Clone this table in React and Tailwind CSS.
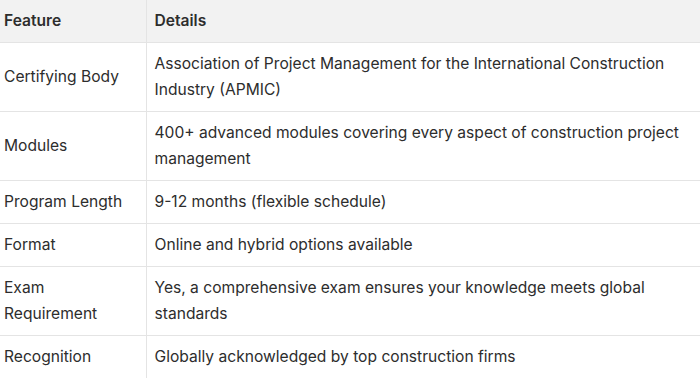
const rows = [
  ["Certifying Body", "Association of Project Management for the International Construction Industry (APMIC)"],
  ["Modules", "400+ advanced modules covering every aspect of construction project management"],
  ["Program Length", "9-12 months (flexible schedule)"],
  ["Format", "Online and hybrid options available"],
  ["Exam Requirement", "Yes, a comprehensive exam ensures your knowledge meets global standards"],
  ["Recognition", "Globally acknowledged by top construction firms"],
];

export default function App() {
  return (
    <div className="w-[700px] h-[378px] overflow-hidden bg-white text-[#2d2d2d] font-['Inter',sans-serif] text-[15.6px] leading-[26px]">
      <table className="w-full border-collapse">
        <thead>
          <tr className="bg-[#f2f2f2] border-b border-[#e4e4e4]">
            <th className="w-[146px] text-left font-semibold pl-1 pr-2 py-2 border-r border-[#e4e4e4]">Feature</th>
            <th className="text-left font-semibold px-2 py-2">Details</th>
          </tr>
        </thead>
        <tbody>
          {rows.map(([k, v]) => (
            <tr key={k} className="border-b border-[#e4e4e4]">
              <td className="pl-1 pr-2 py-2 border-r border-[#e4e4e4] align-middle">{k}</td>
              <td className="pl-2 pr-3 py-2 align-middle">{v}</td>
            </tr>
          ))}
        </tbody>
      </table>
    </div>
  );
}
